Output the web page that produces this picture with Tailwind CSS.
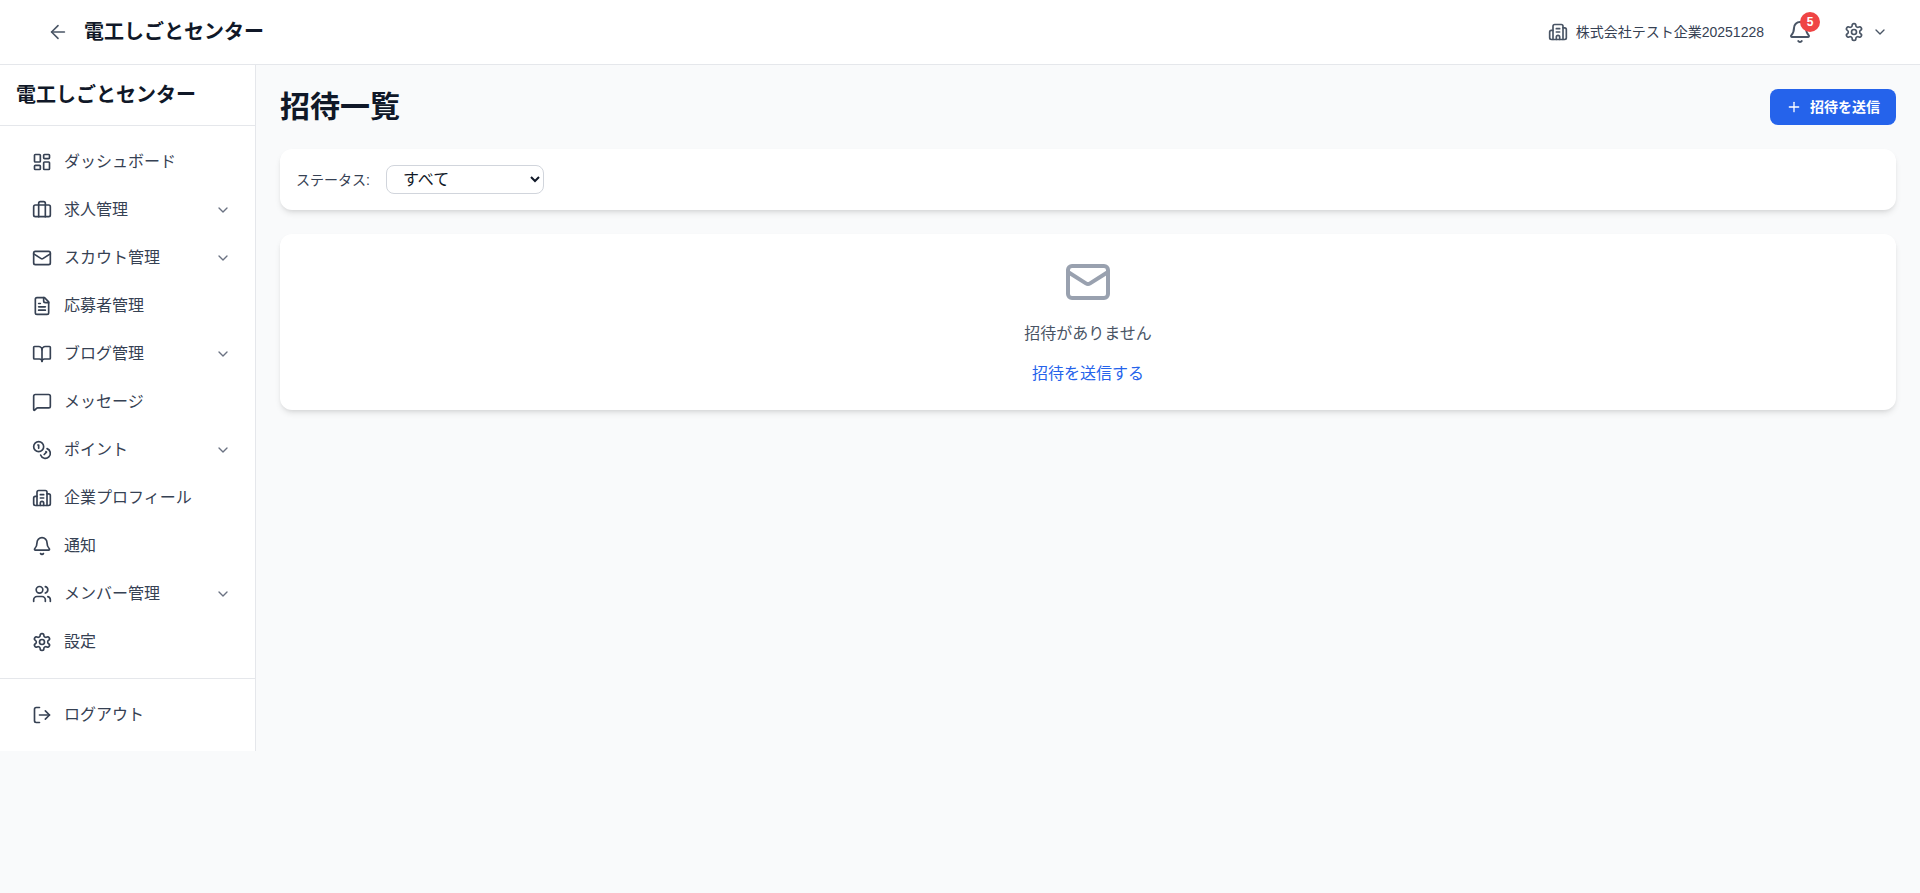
<!DOCTYPE html>
<html lang="ja">
<head>
    <meta charset="UTF-8">
    <meta name="viewport" content="width=device-width, initial-scale=1.0">
    <title>招待一覧</title>
    <script src="https://cdn.jsdelivr.net/npm/@tailwindcss/browser@4"></script>
</head>
<body class="min-h-screen bg-[#f9fafb] font-['Liberation_Sans','Noto_Sans_CJK_JP',sans-serif] text-gray-900">
    <!-- shared icons -->
    <svg class="hidden">
        <symbol id="i-dashboard" viewBox="0 0 24 24"><rect width="7" height="9" x="3" y="3" rx="1"/><rect width="7" height="5" x="14" y="3" rx="1"/><rect width="7" height="9" x="14" y="12" rx="1"/><rect width="7" height="5" x="3" y="16" rx="1"/></symbol>
        <symbol id="i-briefcase" viewBox="0 0 24 24"><path d="M16 20V4a2 2 0 0 0-2-2h-4a2 2 0 0 0-2 2v16"/><rect width="20" height="14" x="2" y="6" rx="2"/></symbol>
        <symbol id="i-mail" viewBox="0 0 24 24"><rect width="20" height="16" x="2" y="4" rx="2"/><path d="m22 7-8.97 5.7a1.94 1.94 0 0 1-2.06 0L2 7"/></symbol>
        <symbol id="i-file" viewBox="0 0 24 24"><path d="M15 2H6a2 2 0 0 0-2 2v16a2 2 0 0 0 2 2h12a2 2 0 0 0 2-2V7Z"/><path d="M14 2v4a2 2 0 0 0 2 2h4"/><path d="M10 9H8"/><path d="M16 13H8"/><path d="M16 17H8"/></symbol>
        <symbol id="i-book" viewBox="0 0 24 24"><path d="M12 7v14"/><path d="M3 18a1 1 0 0 1-1-1V4a1 1 0 0 1 1-1h5a4 4 0 0 1 4 4 4 4 0 0 1 4-4h5a1 1 0 0 1 1 1v13a1 1 0 0 1-1 1h-6a3 3 0 0 0-3 3 3 3 0 0 0-3-3z"/></symbol>
        <symbol id="i-message" viewBox="0 0 24 24"><path d="M22 17a2 2 0 0 1-2 2H6.828a2 2 0 0 0-1.414.586l-2.202 2.202A.71.71 0 0 1 2 21.286V5a2 2 0 0 1 2-2h16a2 2 0 0 1 2 2z"/></symbol>
        <symbol id="i-coins" viewBox="0 0 24 24"><circle cx="8" cy="8" r="6"/><path d="M18.09 10.37A6 6 0 1 1 10.34 18"/><path d="M7 6h1v4"/><path d="m16.71 13.88.7.71-2.82 2.82"/></symbol>
        <symbol id="i-building" viewBox="0 0 24 24"><path d="M10 12h4"/><path d="M10 8h4"/><path d="M14 21v-3a2 2 0 0 0-4 0v3"/><path d="M6 10H4a2 2 0 0 0-2 2v7a2 2 0 0 0 2 2h16a2 2 0 0 0 2-2V9a2 2 0 0 0-2-2h-2"/><path d="M6 21V5a2 2 0 0 1 2-2h8a2 2 0 0 1 2 2v16"/></symbol>
        <symbol id="i-bell" viewBox="0 0 24 24"><path d="M10.268 21a2 2 0 0 0 3.464 0"/><path d="M3.262 15.326A1 1 0 0 0 4 17h16a1 1 0 0 0 .74-1.673C19.41 13.956 18 12.499 18 8A6 6 0 0 0 6 8c0 4.499-1.411 5.956-2.738 7.326"/></symbol>
        <symbol id="i-users" viewBox="0 0 24 24"><path d="M16 21v-2a4 4 0 0 0-4-4H6a4 4 0 0 0-4 4v2"/><path d="M16 3.128a4 4 0 0 1 0 7.744"/><path d="M22 21v-2a4 4 0 0 0-3-3.87"/><circle cx="9" cy="7" r="4"/></symbol>
        <symbol id="i-settings" viewBox="0 0 24 24"><path d="M12.22 2h-.44a2 2 0 0 0-2 2v.18a2 2 0 0 1-1 1.73l-.43.25a2 2 0 0 1-2 0l-.15-.08a2 2 0 0 0-2.73.73l-.22.38a2 2 0 0 0 .73 2.73l.15.1a2 2 0 0 1 1 1.72v.51a2 2 0 0 1-1 1.74l-.15.09a2 2 0 0 0-.73 2.73l.22.38a2 2 0 0 0 2.73.73l.15-.08a2 2 0 0 1 2 0l.43.25a2 2 0 0 1 1 1.73V20a2 2 0 0 0 2 2h.44a2 2 0 0 0 2-2v-.18a2 2 0 0 1 1-1.73l.43-.25a2 2 0 0 1 2 0l.15.08a2 2 0 0 0 2.73-.73l.22-.39a2 2 0 0 0-.73-2.73l-.15-.08a2 2 0 0 1-1-1.74v-.5a2 2 0 0 1 1-1.74l.15-.09a2 2 0 0 0 .73-2.73l-.22-.38a2 2 0 0 0-2.73-.73l-.15.08a2 2 0 0 1-2 0l-.43-.25a2 2 0 0 1-1-1.73V4a2 2 0 0 0-2-2z"/><circle cx="12" cy="12" r="3"/></symbol>
        <symbol id="i-logout" viewBox="0 0 24 24"><path d="M9 21H5a2 2 0 0 1-2-2V5a2 2 0 0 1 2-2h4"/><path d="m16 17 5-5-5-5"/><path d="M21 12H9"/></symbol>
        <symbol id="i-chevron" viewBox="0 0 24 24"><path d="m6 9 6 6 6-6"/></symbol>
    </svg>

    <header class="h-[65px] bg-white border-b border-gray-200 flex items-center justify-between pl-[47px] pr-8">
        <div class="flex items-center gap-[15px]">
            <svg class="w-[22px] h-[22px] text-gray-600" viewBox="0 0 24 24" fill="none" stroke="currentColor" stroke-width="1.75" stroke-linecap="round" stroke-linejoin="round"><path d="m12 19-7-7 7-7"/><path d="M19 12H5"/></svg>
            <span class="text-xl font-semibold text-gray-900">電工しごとセンター</span>
        </div>
        <div class="flex items-center">
            <svg class="w-5 h-5 text-gray-600" fill="none" stroke="currentColor" stroke-width="2" stroke-linecap="round" stroke-linejoin="round"><use href="#i-building"/></svg>
            <span class="ml-2 text-sm text-gray-700">株式会社テスト企業20251228</span>
            <div class="relative ml-6">
                <svg class="w-6 h-6 text-gray-600" fill="none" stroke="currentColor" stroke-width="2" stroke-linecap="round" stroke-linejoin="round"><use href="#i-bell"/></svg>
                <span class="absolute -top-[8px] -right-[8px] w-5 h-5 rounded-full bg-[#ef4444] text-white text-xs font-bold flex items-center justify-center">5</span>
            </div>
            <svg class="ml-[32px] w-5 h-5 text-gray-600" fill="none" stroke="currentColor" stroke-width="2" stroke-linecap="round" stroke-linejoin="round"><use href="#i-settings"/></svg>
            <svg class="ml-2 w-4 h-4 text-gray-600" fill="none" stroke="currentColor" stroke-width="2" stroke-linecap="round" stroke-linejoin="round"><use href="#i-chevron"/></svg>
        </div>
    </header>

    <div class="flex items-start">
        <aside class="w-64 shrink-0 bg-white border-r border-gray-200">
            <div class="px-4 py-4 border-b border-gray-200 text-xl font-bold leading-7 text-gray-900">電工しごとセンター</div>
            <nav class="pl-8 pr-6 py-3 text-base text-gray-700">
                <a class="h-12 flex items-center gap-3"><svg class="w-5 h-5 text-gray-700" fill="none" stroke="currentColor" stroke-width="2" stroke-linecap="round" stroke-linejoin="round"><use href="#i-dashboard"/></svg>ダッシュボード</a>
                <a class="h-12 flex items-center gap-3"><svg class="w-5 h-5 text-gray-700" fill="none" stroke="currentColor" stroke-width="2" stroke-linecap="round" stroke-linejoin="round"><use href="#i-briefcase"/></svg><span class="flex-1">求人管理</span><svg class="w-4 h-4 text-gray-500" fill="none" stroke="currentColor" stroke-width="2" stroke-linecap="round" stroke-linejoin="round"><use href="#i-chevron"/></svg></a>
                <a class="h-12 flex items-center gap-3"><svg class="w-5 h-5 text-gray-700" fill="none" stroke="currentColor" stroke-width="2" stroke-linecap="round" stroke-linejoin="round"><use href="#i-mail"/></svg><span class="flex-1">スカウト管理</span><svg class="w-4 h-4 text-gray-500" fill="none" stroke="currentColor" stroke-width="2" stroke-linecap="round" stroke-linejoin="round"><use href="#i-chevron"/></svg></a>
                <a class="h-12 flex items-center gap-3"><svg class="w-5 h-5 text-gray-700" fill="none" stroke="currentColor" stroke-width="2" stroke-linecap="round" stroke-linejoin="round"><use href="#i-file"/></svg>応募者管理</a>
                <a class="h-12 flex items-center gap-3"><svg class="w-5 h-5 text-gray-700" fill="none" stroke="currentColor" stroke-width="2" stroke-linecap="round" stroke-linejoin="round"><use href="#i-book"/></svg><span class="flex-1">ブログ管理</span><svg class="w-4 h-4 text-gray-500" fill="none" stroke="currentColor" stroke-width="2" stroke-linecap="round" stroke-linejoin="round"><use href="#i-chevron"/></svg></a>
                <a class="h-12 flex items-center gap-3"><svg class="w-5 h-5 text-gray-700" fill="none" stroke="currentColor" stroke-width="2" stroke-linecap="round" stroke-linejoin="round"><use href="#i-message"/></svg>メッセージ</a>
                <a class="h-12 flex items-center gap-3"><svg class="w-5 h-5 text-gray-700" fill="none" stroke="currentColor" stroke-width="2" stroke-linecap="round" stroke-linejoin="round"><use href="#i-coins"/></svg><span class="flex-1">ポイント</span><svg class="w-4 h-4 text-gray-500" fill="none" stroke="currentColor" stroke-width="2" stroke-linecap="round" stroke-linejoin="round"><use href="#i-chevron"/></svg></a>
                <a class="h-12 flex items-center gap-3"><svg class="w-5 h-5 text-gray-700" fill="none" stroke="currentColor" stroke-width="2" stroke-linecap="round" stroke-linejoin="round"><use href="#i-building"/></svg>企業プロフィール</a>
                <a class="h-12 flex items-center gap-3"><svg class="w-5 h-5 text-gray-700" fill="none" stroke="currentColor" stroke-width="2" stroke-linecap="round" stroke-linejoin="round"><use href="#i-bell"/></svg>通知</a>
                <a class="h-12 flex items-center gap-3"><svg class="w-5 h-5 text-gray-700" fill="none" stroke="currentColor" stroke-width="2" stroke-linecap="round" stroke-linejoin="round"><use href="#i-users"/></svg><span class="flex-1">メンバー管理</span><svg class="w-4 h-4 text-gray-500" fill="none" stroke="currentColor" stroke-width="2" stroke-linecap="round" stroke-linejoin="round"><use href="#i-chevron"/></svg></a>
                <a class="h-12 flex items-center gap-3"><svg class="w-5 h-5 text-gray-700" fill="none" stroke="currentColor" stroke-width="2" stroke-linecap="round" stroke-linejoin="round"><use href="#i-settings"/></svg>設定</a>
            </nav>
            <div class="border-t border-gray-200 pl-8 pr-6 py-3 text-base text-gray-700">
                <a class="h-12 flex items-center gap-3"><svg class="w-5 h-5 text-gray-700" fill="none" stroke="currentColor" stroke-width="2" stroke-linecap="round" stroke-linejoin="round"><use href="#i-logout"/></svg>ログアウト</a>
            </div>
        </aside>

        <main class="flex-1 p-6">
            <div class="flex items-center justify-between mb-6">
                <h1 class="text-3xl font-bold text-gray-900">招待一覧</h1>
                <button class="flex items-center gap-2 px-4 py-2 rounded-lg bg-[#2563eb] text-white text-sm font-semibold">
                    <svg class="w-4 h-4" viewBox="0 0 24 24" fill="none" stroke="currentColor" stroke-width="2" stroke-linecap="round" stroke-linejoin="round"><path d="M5 12h14"/><path d="M12 5v14"/></svg>
                    招待を送信
                </button>
            </div>

            <div class="bg-white rounded-xl shadow-md p-4 mb-6 flex items-center gap-4">
                <label class="text-sm text-gray-700">ステータス:</label>
                <select class="w-[158px] h-[29px] border border-gray-300 rounded-lg px-3 text-base text-gray-900">
                    <option>すべて</option>
                </select>
            </div>

            <div class="bg-white rounded-xl shadow-md p-6 flex flex-col items-center">
                <svg class="w-12 h-12 text-gray-400 mb-4" fill="none" stroke="currentColor" stroke-width="2" stroke-linecap="round" stroke-linejoin="round"><use href="#i-mail"/></svg>
                <p class="text-gray-600">招待がありません</p>
                <a class="mt-4 text-[#2563eb]">招待を送信する</a>
            </div>
        </main>
    </div>
</body>
</html>
